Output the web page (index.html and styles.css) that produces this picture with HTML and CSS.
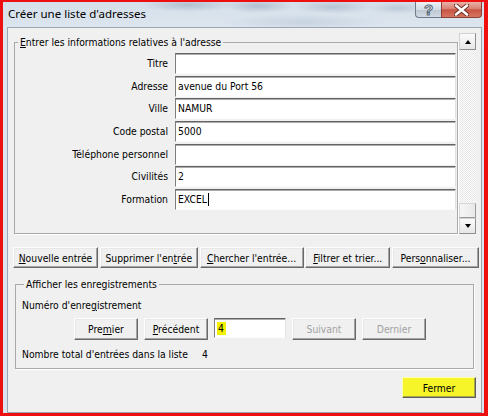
FILE: index.html
```html
<!DOCTYPE html>
<html lang="fr">
<head>
<meta charset="utf-8">
<title>Créer une liste d'adresses</title>
<link rel="stylesheet" href="styles.css">
</head>
<body>
<div class="window">
  <div class="titlebar">
    <span class="title">Créer une liste d'adresses</span>
    <div class="caption-btns">
      <div class="cap help"><span class="qmark">?</span></div>
      <div class="cap close">
        <svg width="15" height="12" viewBox="0 0 15 12"><path d="M2 1.5 L13 10.5 M13 1.5 L2 10.5" stroke="#6a2c24" stroke-width="4.4" stroke-linecap="round"/><path d="M2 1.5 L13 10.5 M13 1.5 L2 10.5" stroke="#fff" stroke-width="2.6" stroke-linecap="round"/></svg>
      </div>
    </div>
  </div>
  <div class="client">
    <div class="entry-panel">
      <fieldset class="group group-entry">
        <legend><u>E</u>ntrer les informations relatives à l'adresse</legend>
        <div class="fields">
          <span class="lbl">Titre</span><div class="edit"></div>
          <span class="lbl">Adresse</span><div class="edit">avenue du Port 56</div>
          <span class="lbl">Ville</span><div class="edit">NAMUR</div>
          <span class="lbl">Code postal</span><div class="edit">5000</div>
          <span class="lbl">Téléphone personnel</span><div class="edit"></div>
          <span class="lbl">Civilités</span><div class="edit">2</div>
          <span class="lbl">Formation</span><div class="edit">EXCEL<span class="caret"></span></div>
        </div>
      </fieldset>
      <div class="vscroll">
        <div class="sb-btn up"><span class="arrow-up"></span></div>
        <div class="sb-track"></div>
        <div class="sb-thumb"></div>
        <div class="sb-btn down"><span class="arrow-down"></span></div>
      </div>
    </div>

    <div class="action-row">
      <button class="btn w-new"><u>N</u>ouvelle entrée</button>
      <button class="btn w-del">Supprimer l'en<u>t</u>rée</button>
      <button class="btn w-find"><u>C</u>hercher l'entrée...</button>
      <button class="btn w-filter"><u>F</u>iltrer et trier...</button>
      <button class="btn w-custom">Pers<u>o</u>nnaliser...</button>
    </div>

    <fieldset class="group group-nav">
      <legend>Afficher les enregistrements</legend>
      <div class="rec-label">Numéro d'enre<u>g</u>istrement</div>
      <div class="nav-row">
        <button class="btn nav">Pre<u>m</u>ier</button>
        <button class="btn nav"><u>P</u>récédent</button>
        <div class="edit rec-input"><span class="hl">4</span></div>
        <button class="btn nav disabled">Suivant</button>
        <button class="btn nav disabled">Dernier</button>
      </div>
      <div class="total"><span class="total-label">Nombre total d'entrées dans la liste</span><span>4</span></div>
    </fieldset>

    <div class="footer">
      <button class="btn fermer">Fermer</button>
    </div>
  </div>
</div>
</body>
</html>
```
FILE: styles.css
```css
* { box-sizing: border-box; }
html, body { margin: 0; padding: 0; }
body {
  width: 488px;
  height: 416px;
  overflow: hidden;
  font-family: "DejaVu Sans Condensed", "DejaVu Sans", sans-serif;
  font-size: 10.3px;
  color: #000;
}

.window {
  width: 488px;
  height: 416px;
  border: solid #ee1010;
  border-width: 2px 4px 3px 3px;
  display: flex;
  flex-direction: column;
  background:
    radial-gradient(ellipse 45px 7px at 185px 3px, rgba(110,130,160,.35), transparent),
    radial-gradient(ellipse 35px 7px at 255px 4px, rgba(110,130,160,.35), transparent),
    radial-gradient(ellipse 40px 7px at 330px 5px, rgba(110,130,160,.3), transparent),
    radial-gradient(ellipse 30px 6px at 395px 6px, rgba(110,130,160,.25), transparent),
    radial-gradient(ellipse 80px 8px at 300px 20px, rgba(140,160,185,.25), transparent),
    linear-gradient(#d6e0ea, #dde6ef 30px, #dbe4ee);
}

.titlebar {
  height: 25px;
  flex: none;
  display: flex;
  align-items: flex-start;
  justify-content: space-between;
}
.title {
  font-family: "Noto Sans", "Open Sans", sans-serif;
  font-size: 11.5px;
  line-height: 16px;
  padding: 4px 0 0 5px;
  color: #000;
}
.caption-btns { display: flex; margin-right: 2px; }
.cap {
  height: 16px;
  display: flex;
  align-items: center;
  justify-content: center;
  border: 1px solid #6d7a89;
  border-top: none;
}
.help {
  width: 26px;
  border-right: none;
  border-radius: 0 0 0 4px;
  background: linear-gradient(#eef2f6, #d3dbe4 50%, #bcc7d3 52%, #d2dbe5);
}
.qmark {
  font-family: "Liberation Sans", sans-serif;
  font-weight: bold;
  font-size: 15px;
  line-height: 15px;
  color: #f6f8fa;
  -webkit-text-stroke: 1px #5a6878;
}
.close {
  width: 41px;
  border-radius: 0 0 4px 0;
  border-color: #8b3f36;
  background: linear-gradient(#e8b1a8, #d98174 45%, #c85443 52%, #d77560);
}

.client {
  flex: 1;
  margin: 0 2px 0 4px;
  border: 1px solid #9aa6b3;
  background: #f0f0f0;
  display: flex;
  flex-direction: column;
}

/* upper scrolling panel */
.entry-panel {
  display: flex;
  margin: 5px 5px 0 6px;
  height: 201px;
  flex: none;
}
.group {
  margin: 0;
  padding: 0;
  min-width: 0;
  border: 1px solid #a9a9a9;
  box-shadow: 1px 1px 0 #fff;
}
.group legend {
  padding: 0 2px;
  margin-left: 3px;
  line-height: 12px;
}
.group-entry {
  flex: 1;
  margin: 3px 1px 0 0;
}
.fields {
  display: grid;
  grid-template-columns: 153px 1fr;
  column-gap: 7px;
  row-gap: 1.67px;
  padding: 5px 1px 0 0;
}
.lbl {
  text-align: right;
  line-height: 21px;
  white-space: nowrap;
}
.edit {
  height: 21px;
  background: #fff;
  border: 1px solid;
  border-color: #646464 #e2e2e2 #fbfbfb #7e7e7e;
  box-shadow: inset 0 1px 0 #acacac;
  padding-left: 2px;
  line-height: 19px;
  white-space: nowrap;
  overflow: hidden;
}
.caret {
  display: inline-block;
  width: 1px;
  height: 13px;
  background: #000;
  vertical-align: -3px;
  margin-left: 1px;
}

.vscroll {
  width: 17px;
  display: flex;
  flex-direction: column;
  background: repeating-conic-gradient(#fdfdfd 0 25%, #e6e6e6 0 50%) 0 0 / 2px 2px;
}
.sb-btn {
  height: 17px;
  flex: none;
  display: flex;
  align-items: center;
  justify-content: center;
  border: 1px solid;
  border-color: #d2d2d2 #8e8e8e #8e8e8e #d2d2d2;
  background: linear-gradient(#fbfbfb, #e6e6e6);
}
.sb-btn.down { height: 16px; }
.sb-track { flex: 1; }
.sb-thumb {
  height: 15px;
  flex: none;
  border: 1px solid;
  border-color: #d6d6d6 #9a9a9a #9a9a9a #d6d6d6;
  background: linear-gradient(90deg, #f6f6f6, #e8e8e8);
}
.arrow-up, .arrow-down {
  width: 0;
  height: 0;
  border-left: 3.5px solid transparent;
  border-right: 3.5px solid transparent;
}
.arrow-up { border-bottom: 4px solid #000; }
.arrow-down { border-top: 4px solid #000; }

/* buttons */
.btn {
  font: inherit;
  color: #000;
  height: 21px;
  padding: 0;
  background: #f0f0f0;
  border: 1px solid;
  border-color: #fdfdfd #696969 #696969 #fdfdfd;
  box-shadow: inset -1px -1px 0 #a3a3a3, inset 1px 1px 0 #e8e8e8;
  text-align: center;
  white-space: nowrap;
}
.action-row {
  display: flex;
  gap: 1.75px;
  margin: 13px 0 0 5px;
  flex: none;
}
.w-new { width: 85px; }
.w-del { width: 98px; }
.w-find { width: 104px; }
.w-filter { width: 85px; }
.w-custom { width: 87px; }

.group-nav {
  flex: none;
  margin: 10px 7px 0 7px;
  height: 91px;
  padding: 9px 0 0 6px;
}
.group-nav legend { margin-left: 2px; }
.rec-label { line-height: 12px; }
.nav-row {
  display: flex;
  align-items: flex-start;
  gap: 6px;
  margin: 7px 0 0 52px;
  height: 22px;
}
.btn.nav { width: 64px; height: 22px; }
.rec-input {
  width: 72px;
  height: 20px;
  line-height: 18px;
}
.hl {
  background: #f2f200;
  padding: 0 2px 1px 1px;
}
.disabled { color: #a2a2a2; }
.total {
  margin-top: 8px;
  line-height: 12px;
  display: flex;
}
.total-label { width: 180px; }

.footer {
  display: flex;
  justify-content: flex-end;
  margin: 8px 5px 0 0;
}
.btn.fermer {
  width: 74px;
  background: #f5f52a;
  border-color: #ffffb0 #5e5e5e #5e5e5e #ffffb0;
  box-shadow: inset -1px -1px 0 #a8a84a;
}
```
